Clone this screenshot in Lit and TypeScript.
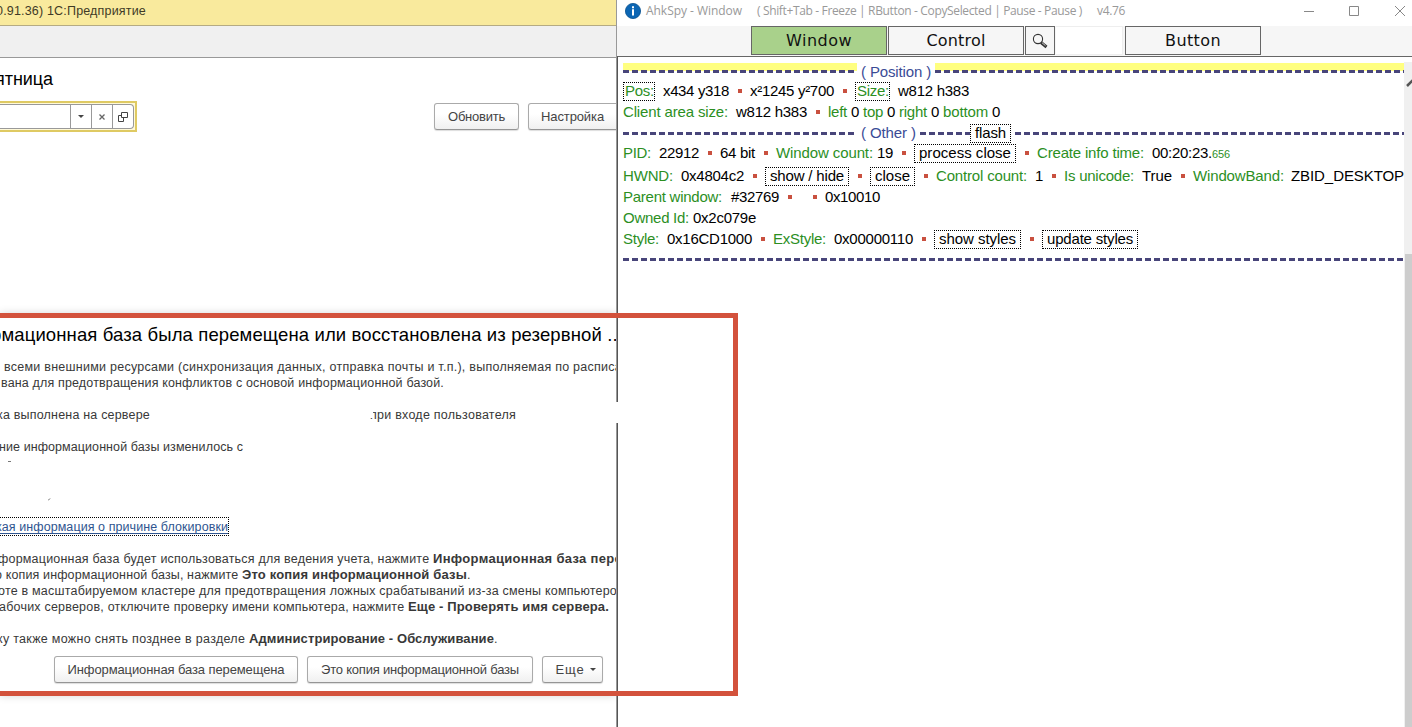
import { LitElement, html, css, svg, nothing } from "lit";
import { customElement, property } from "lit/decorators.js";

/** A run of text whose tracking is adjusted to fill a given width. */
@customElement("fit-text")
class FitText extends LitElement {
  @property({ type: Number }) w = 0;
  static styles = css`
    :host { display: block; flex: none; white-space: pre; }
    .run { display: inline-block; white-space: pre; }
  `;
  render() {
    return html`<span class="run"><slot></slot></span>`;
  }
  firstUpdated() {
    const run = this.renderRoot.querySelector(".run") as HTMLElement;
    const count = (this.textContent || "").length;
    const natural = run.getBoundingClientRect().width;
    this.style.width = `${this.w}px`;
    if (count > 1) run.style.letterSpacing = `${(this.w - natural) / count}px`;
  }
}

type Seg = { k: string; x: number; e: number; t?: string };
const s = (k: string, x: number, e: number, t?: string): Seg => ({ k, x, e, t });
const dot = (x: number) => s("dot", x, x + 4);

const ROWS: { h: number; segs: Seg[] }[] = [
  { h: 19, segs: [s("rule hot", 623, 857), s("head", 861, 931, "( Position )"), s("rule hot", 935, 1404)] },
  { h: 20, segs: [s("key box", 623, 655, "Pos:"), s("val", 663, 729, "x434 y318"), dot(738), s("val", 750, 834, "x²1245 y²700"), dot(843), s("key box", 855, 890, "Size:"), s("val", 898, 969, "w812 h383")] },
  { h: 22, segs: [s("key", 623, 728, "Client area size:"), s("val", 736, 807, "w812 h383"), dot(816), s("key", 828, 847, "left"), s("val", 851, 859, "0"), s("key", 863, 883, "top"), s("val", 887, 895, "0"), s("key", 899, 927, "right"), s("val", 931, 939, "0"), s("key", 943, 988, "bottom"), s("val", 992, 1000, "0")] },
  { h: 20, segs: [s("rule", 623, 855), s("head", 861, 916, "( Other )"), s("rule", 920, 970), s("val box pad", 970, 1011, "flash"), s("rule late", 1011, 1404)] },
  { h: 20, segs: [s("key", 623, 651, "PID:"), s("val", 659, 699, "22912"), dot(708), s("val", 720, 755, "64 bit"), dot(764), s("key", 776, 873, "Window count:"), s("val", 877, 893, "19"), dot(902), s("val box pad", 914, 1016, "process close"), dot(1025), s("key", 1037, 1144, "Create info time:"), s("val", 1152, 1212, "00:20:23."), s("key tiny", 1212, 1230, "656")] },
  { h: 26, segs: [s("key", 623, 673, "HWND:"), s("val", 681, 744, "0x4804c2"), dot(753), s("val box pad", 765, 849, "show / hide"), dot(858), s("val box pad", 870, 915, "close"), dot(924), s("key", 936, 1027, "Control count:"), s("val", 1035, 1043, "1"), dot(1052), s("key", 1064, 1134, "Is unicode:"), s("val", 1142, 1172, "True"), dot(1181), s("key", 1193, 1284, "WindowBand:"), s("val", 1291, 1404, "ZBID_DESKTOP")] },
  { h: 16, segs: [s("key", 623, 722, "Parent window:"), s("val", 731, 779, "#32769"), dot(788), dot(813), s("val", 825, 880, "0x10010")] },
  { h: 25, segs: [s("key", 623, 689, "Owned Id:"), s("val", 693, 756, "0x2c079e")] },
  { h: 18, segs: [s("key", 623, 659, "Style:"), s("val", 667, 752, "0x16CD1000"), dot(761), s("key", 773, 826, "ExStyle:"), s("val", 834, 913, "0x00000110"), dot(922), s("val box pad", 934, 1021, "show styles"), dot(1030), s("val box pad", 1042, 1138, "update styles")] },
  { h: 22, segs: [s("rule", 623, 1404)] },
];

const LINES: Seg[][] = [
  [s("", 4, 622, "всеми внешними ресурсами (синхронизация данных, отправка почты и т.п.), выполняемая по расписа")],
  [s("", 1, 444, "вана для предотвращения конфликтов с основой информационной базой.")],
  [],
  [s("", -3, 150, "ка выполнена на сервере"), s("cut", 370, 516, "при входе пользователя")],
  [],
  [s("", -1, 243, "ние информационной базы изменилось с")],
  [s("speck", 8, 11)],
  [],
  [],
  [],
  [s("link", -4, 228, "кая информация о причине блокировки")],
  [],
  [s("", -2, 433, "формационная база будет использоваться для ведения учета, нажмите "), s("b", 433, 622, "Информационная база пере")],
  [s("", -5, 242, "о копия информационной базы, нажмите "), s("b", 242, 467, "Это копия информационной базы"), s("", 467, 470, ".")],
  [s("", -2, 617, "оте в масштабируемом кластере для предотвращения ложных срабатываний из-за смены компьютеро")],
  [s("", -1, 408, "абочих серверов, отключите проверку имени компьютера, нажмите "), s("b", 408, 609, "Еще - Проверять имя сервера.")],
  [],
  [s("", -3, 249, "ку также можно снять позднее в разделе "), s("b", 249, 494, "Администрирование - Обслуживание"), s("", 494, 497, ".")],
];

function flow(segs: Seg[], origin: number) {
  let at = origin;
  return segs.map((g) => {
    const gap = g.x - at;
    at = g.e;
    const inset = g.k.includes("pad") ? 10 : g.k.includes("box") ? 3 : 0;
    return html`<div class="seg ${g.k}" style="margin-left:${gap}px;width:${g.e - g.x}px">
      ${g.t ? html`<fit-text .w=${g.e - g.x - inset}>${g.t}</fit-text>` : nothing}
    </div>`;
  });
}

@customElement("app-root")
class AppRoot extends LitElement {
  static styles = css`
    :host { display: flex; position: relative; width: 1412px; height: 727px; overflow: hidden; background: #fff; font-family: "Liberation Sans", Arial, sans-serif; color: #000; }
    * { box-sizing: border-box; }
    .left { width: 616px; flex: none; overflow: hidden; display: flex; flex-direction: column; }
    .caption { height: 26px; flex: none; background: #f9ea9d; border-bottom: 1px solid #b5ab83; font-size: 12.5px; line-height: 22px; color: #3f3a26; }
    .shift { margin-left: -4px; }
    .strip { height: 32px; flex: none; background: #f0f0f0; border-bottom: 1px solid #999; }
    .day { height: 43px; padding-top: 10px; font-size: 18px; line-height: 22px; }
    .day .shift { margin-left: -5px; }
    .tools { height: 31px; display: flex; align-items: center; }
    .focus { width: 137px; height: 31px; border: 2px solid #dfca63; border-left: 0; padding: 1px 1px 1px 0; background: #fff9d9; flex: none; }
    .field { height: 25px; display: flex; justify-content: flex-end; background: #fff; border: 1px solid #999; border-left: 0; border-radius: 0 4px 4px 0; }
    .cell { width: 21px; border-left: 1px solid #999; display: flex; align-items: center; justify-content: center; }
    .btn { height: 27px; flex: none; display: flex; align-items: center; justify-content: center; border: 1px solid #aaa; border-bottom-color: #959595; border-radius: 3px; background: linear-gradient(#fff 40%, #f0f0f0); box-shadow: 0 1px 1px #ddd; font-size: 13px; color: #444; line-height: 16px; }
    .refresh { width: 85px; margin-left: 297px; }
    .setup { width: 120px; margin-left: 9px; justify-content: flex-start; padding-left: 12px; }
    .dialog { margin-top: 181px; height: 383px; flex: none; padding-top: 10px; box-shadow: 0 0 8px #d8d8d8; }
    .title { font-size: 18.5px; line-height: 24px; height: 36px; }
    .title .shift { margin-left: -9px; }
    .line { height: 16px; display: flex; font-size: 12.5px; line-height: 16px; color: #383838; }
    .seg { flex: none; position: relative; }
    .b { font-weight: bold; font-size: 13px; }
    .cut::before { content: ""; position: absolute; z-index: 1; left: 0; top: 2px; width: 3px; height: 9px; background: #fff; }
    .speck { height: 1px; margin-top: 6px; background: #777; }
    .link { color: #2f5590; height: 17px; margin-top: -1px; padding-top: 1px; outline: 1px dotted #000; outline-offset: 0; }
    .link fit-text { height: 15px; border-bottom: 1px solid #2f5590; }
    .actions { display: flex; gap: 9px; padding: 9px 0 0 54px; }
    .move { width: 244px; } .copy { width: 226px; } .more { width: 61px; gap: 5px; padding-left: 6px; }

    .right { flex: 1; min-width: 0; display: flex; flex-direction: column; border-left: 1px solid #999; }
    .bar { height: 26px; flex: none; display: flex; align-items: center; color: #999; font: 12px/20px "Open Sans", "Noto Sans", sans-serif; padding: 0 0 5px 8px; }
    .name { margin-left: 5px; } .hint { margin-left: 15px; } .ver { margin-left: 15px; }
    .sys { margin-left: auto; flex: none; }
    .tabs { height: 30px; flex: none; display: flex; background: #f6f6f6; padding-left: 134px; }
    .tab { width: 136px; height: 29px; margin-right: 1px; border: 1px solid #666; display: flex; align-items: center; justify-content: center; font: 16px/20px "DejaVu Sans", sans-serif; color: #111; background: #f6f6f6; }
    .on { background: #a9d18b; }
    .lens { width: 30px; }
    .blank { width: 67px; height: 29px; margin-right: 2px; background: #fff; border: 1px solid #eee; border-left: 0; }
    .page { flex: 1; display: flex; border-top: 1px solid #666; border-left: 1px solid #555; }
    .info { width: 786px; flex: none; padding-top: 5px; overflow: hidden; font-size: 15px; line-height: 18px; }
    .row { display: flex; align-items: center; }
    .key { color: #2c8f1f; }
    .head { color: #3a4b96; }
    .box { height: 19px; border: 1px dotted #000; padding-left: 1px; line-height: 16px; }
    .pad { padding-left: 4px; }
    .tiny { font-size: 11px; padding-top: 2px; }
    .dot { height: 4px; background: #c9503f; }
    .rule { height: 3px; margin-top: 1px; background: repeating-linear-gradient(90deg, #48457a 0 6px, transparent 6px 9px); }
    .late { background-position-x: 4px; background-repeat: no-repeat; }
    .hot { height: 10px; margin-top: -7px; background: repeating-linear-gradient(90deg, #48457a 0 6px, transparent 6px 9px) 0 100% / 100% 3px no-repeat, linear-gradient(#ffff80, #ffff80) 0 0 / 100% 8px no-repeat; }
    .scroll { flex: 1; margin-top: 5px; background: #f0f0f0; display: flex; flex-direction: column; }
    .thumb { margin: 162px 0 0 1px; flex: 1; background: #cdcdcd; }
    svg { display: block; flex: none; }
    .frame { position: absolute; left: -10px; top: 313px; width: 748px; height: 383px; border: 5px solid #d3523c; z-index: 3; }
    .gap { position: absolute; left: 612px; top: 402px; width: 10px; height: 21px; background: #fff; z-index: 2; }
    .tick { position: absolute; left: 48px; top: 498px; z-index: 2; }
  `;

  render() {
    const down = svg`<path d="M0 0h6L3 3z" fill="#444"/>`;
    return html`
      <div class="left">
        <div class="caption"><fit-text class="shift" .w=${150}>0.91.36) 1С:Предприятие</fit-text></div>
        <div class="strip"></div>
        <div class="day"><fit-text class="shift" .w=${58}>ятница</fit-text></div>
        <div class="tools">
          <div class="focus"><div class="field">
            <div class="cell"><svg width="6" height="3">${down}</svg></div>
            <div class="cell"><svg width="6" height="6" stroke="#666" stroke-width="1.3"><path d="M.5.5l5 5M5.5.5l-5 5"/></svg></div>
            <div class="cell"><svg width="10" height="10" fill="none" stroke="#444"><path d="M3.5.5h6v5h-6zM3.5 3.5h-3v6h5v-4"/></svg></div>
          </div></div>
          <div class="btn refresh"><fit-text .w=${57}>Обновить</fit-text></div>
          <div class="btn setup"><fit-text .w=${63}>Настройка</fit-text></div>
        </div>
        <div class="dialog">
          <div class="title"><fit-text class="shift" .w=${632}>рмационная база была перемещена или восстановлена из резервной ...</fit-text></div>
          ${LINES.map((l) => html`<div class="line">${flow(l, 0)}</div>`)}
          <div class="actions">
            <div class="btn move"><fit-text .w=${217}>Информационная база перемещена</fit-text></div>
            <div class="btn copy"><fit-text .w=${198}>Это копия информационной базы</fit-text></div>
            <div class="btn more"><fit-text .w=${29}>Еще</fit-text><svg width="6" height="3">${down}</svg></div>
          </div>
        </div>
      </div>
      <div class="right">
        <div class="bar">
          <svg width="16" height="16" viewBox="0 0 16 16"><circle cx="8" cy="8" r="7.6" fill="#0c66b4" stroke="#07508f" stroke-width=".8"/><path d="M7 6.3h2v6.2H7zM7 3.2h2v2H7z" fill="#fff"/></svg>
          <fit-text class="name" .w=${96}>AhkSpy - Window</fit-text>
          <fit-text class="hint" .w=${325}>( Shift+Tab - Freeze | RButton - CopySelected | Pause - Pause )</fit-text>
          <fit-text class="ver" .w=${28}>v4.76</fit-text>
          <svg class="sys" width="108" height="12" fill="none" stroke="#888"><path d="M0 6.500h10M45.500 1.500h9v9h-9zM91 1l10 10M101 1l-10 10"/></svg>
        </div>
        <div class="tabs">
          <div class="tab on"><fit-text .w=${66}>Window</fit-text></div>
          <div class="tab"><fit-text .w=${59}>Control</fit-text></div>
          <div class="tab lens"><svg width="16" height="16" fill="none"><circle cx="6" cy="6" r="4.6" stroke="#333" stroke-width="1.1"/><path d="M9 9.500l5.500 4.500" stroke="#333" stroke-width="3"/><path d="M10 9.700l3.500 3" stroke="#ddd" stroke-width=".9"/></svg></div>
          <div class="blank"></div>
          <div class="tab"><fit-text .w=${56}>Button</fit-text></div>
        </div>
        <div class="page">
          <div class="info">
            ${ROWS.map((r) => html`<div class="row" style="height:${r.h}px">${flow(r.segs, 618)}</div>`)}
          </div>
          <div class="scroll">
            <svg width="8" height="30" fill="none" stroke="#555" stroke-width="2.500"><path d="M3 24l6-6"/></svg>
            <div class="thumb"></div>
          </div>
        </div>
      </div>
      <div class="gap"></div>
      <svg class="tick" width="3" height="3" stroke="#666"><path d="M0 2.500l2-2"/></svg>
      <div class="frame"></div>
    `;
  }
}
